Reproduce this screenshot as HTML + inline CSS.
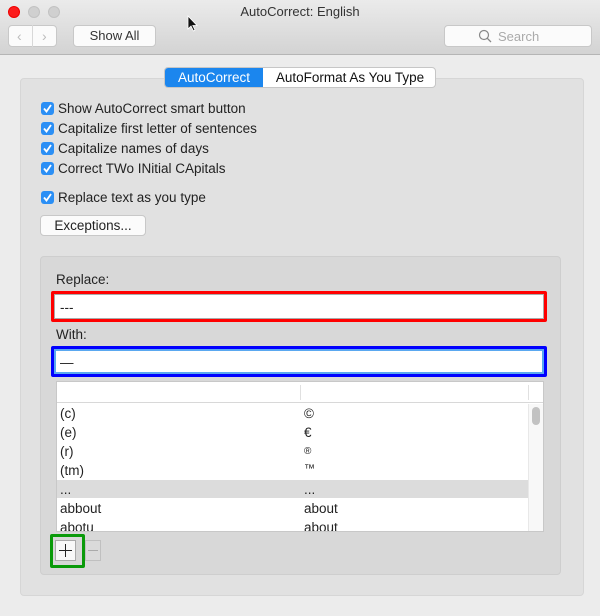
<!DOCTYPE html>
<html><head><meta charset="utf-8"><style>
*{box-sizing:border-box;margin:0;padding:0}
body{width:600px;height:616px;background:#ececec;font-family:"Liberation Sans",sans-serif;font-size:13.5px;color:#222;position:relative;overflow:hidden}
.abs{position:absolute}
.tb{left:0;top:0;width:600px;height:55px;background:linear-gradient(#ebebeb,#d3d3d3);border-bottom:1px solid #b5b5b5}
.light{width:12px;height:12px;border-radius:50%;top:6px;background:#d0d0d0;border:1px solid #c2c2c2}
.btn{background:#fbfbfb;border:1px solid #c8c8c8;border-radius:4px}
.cb{left:41px;width:13px;height:13px;border-radius:3px;background:#2b8ff5}
.cb svg{position:absolute;left:1px;top:1px}
.lbl{left:58px}
.row{left:57px;width:471px;height:19px}
.row span{position:absolute;top:2px}
</style></head><body>
<div class="abs tb"></div>
<div class="abs light" style="left:8px;background:#fc1c1c;border-color:#e00"></div>
<div class="abs light" style="left:28px"></div>
<div class="abs light" style="left:48px"></div>
<div class="abs" style="left:0;width:600px;top:4px;text-align:center;font-size:13px;color:#333">AutoCorrect: English</div>
<div class="abs btn" style="left:8px;top:25px;width:49px;height:22px"></div>
<div class="abs" style="left:32px;top:25px;width:1px;height:22px;background:#d8d8d8"></div>
<div class="abs" style="left:17px;top:28px;color:#bbb;font-size:14px">&#x2039;</div>
<div class="abs" style="left:42px;top:28px;color:#bbb;font-size:14px">&#x203A;</div>
<div class="abs btn" style="left:73px;top:25px;width:83px;height:22px;text-align:center;line-height:20px;color:#333;font-size:13px">Show All</div>
<div class="abs btn" style="left:444px;top:25px;width:148px;height:22px"></div>
<svg class="abs" style="left:478px;top:29px" width="14" height="14"><circle cx="6" cy="6" r="4.5" fill="none" stroke="#888" stroke-width="1.2"/><line x1="9.3" y1="9.3" x2="13" y2="13" stroke="#888" stroke-width="1.3"/></svg>
<div class="abs" style="left:498px;top:29px;color:#aaa;font-size:13px">Search</div>

<div class="abs" style="left:20px;top:78px;width:564px;height:518px;background:#e1e1e1;border:1px solid #d6d6d6;border-radius:4px"></div>
<div class="abs" style="left:164px;top:67px;width:272px;height:21px;background:#fff;border:1px solid #c6c6c6;border-radius:4px;overflow:hidden;font-size:13.5px">
<div class="abs" style="left:0;top:0;width:98px;height:21px;background:#1b86ee;color:#fff;text-align:center;line-height:19px">AutoCorrect</div>
<div class="abs" style="left:98px;top:0;width:174px;text-align:center;line-height:19px;color:#111">AutoFormat As You Type</div></div>

<div class="abs cb" style="top:102px"><svg width="11" height="11"><path d="M2 5.5 L4.5 8.5 L9 2" stroke="#fff" stroke-width="1.8" fill="none"/></svg></div>
<div class="abs lbl" style="top:101px">Show AutoCorrect smart button</div>
<div class="abs cb" style="top:122px"><svg width="11" height="11"><path d="M2 5.5 L4.5 8.5 L9 2" stroke="#fff" stroke-width="1.8" fill="none"/></svg></div>
<div class="abs lbl" style="top:121px">Capitalize first letter of sentences</div>
<div class="abs cb" style="top:142px"><svg width="11" height="11"><path d="M2 5.5 L4.5 8.5 L9 2" stroke="#fff" stroke-width="1.8" fill="none"/></svg></div>
<div class="abs lbl" style="top:141px">Capitalize names of days</div>
<div class="abs cb" style="top:162px"><svg width="11" height="11"><path d="M2 5.5 L4.5 8.5 L9 2" stroke="#fff" stroke-width="1.8" fill="none"/></svg></div>
<div class="abs lbl" style="top:161px">Correct TWo INitial CApitals</div>
<div class="abs cb" style="top:191px"><svg width="11" height="11"><path d="M2 5.5 L4.5 8.5 L9 2" stroke="#fff" stroke-width="1.8" fill="none"/></svg></div>
<div class="abs lbl" style="top:190px">Replace text as you type</div>
<div class="abs btn" style="left:40px;top:215px;width:106px;height:21px;text-align:center;line-height:19px">Exceptions...</div>

<div class="abs" style="left:40px;top:256px;width:521px;height:319px;background:#d8d8d8;border:1px solid #cecece;border-radius:4px"></div>
<div class="abs" style="left:56px;top:272px">Replace:</div>
<div class="abs" style="left:51px;top:291px;width:496px;height:31px;border:3px solid #f00;border-radius:2px;background:#fff"><div style="position:absolute;inset:0;border:1px solid #aaa"></div><div class="abs" style="left:6px;top:6px">---</div></div>
<div class="abs" style="left:56px;top:327px">With:</div>
<div class="abs" style="left:51px;top:346px;width:496px;height:31px;border:3px solid #00f;border-radius:2px;background:#fff"><div style="position:absolute;inset:0;border:2px solid #5aa8f0"></div><div class="abs" style="left:6px;top:6px">—</div></div>

<div class="abs" style="left:56px;top:381px;width:488px;height:151px;background:#fff;border:1px solid #c8c8c8;overflow:hidden">
<div class="abs" style="left:0;top:0;width:488px;height:21px;border-bottom:1px solid #d8d8d8"></div>
<div class="abs" style="left:243px;top:3px;width:1px;height:15px;background:#e0e0e0"></div>
<div class="abs" style="left:471px;top:3px;width:1px;height:15px;background:#e0e0e0"></div>
<div class="abs" style="left:471px;top:22px;width:16px;height:130px;background:#f8f8f8;border-left:1px solid #e8e8e8"></div>
<div class="abs" style="left:475px;top:25px;width:8px;height:18px;border-radius:4px;background:#c2c2c2"></div>
</div>
<div class="abs row" style="top:404px"><span style="left:3px">(c)</span><span style="left:247px">©</span></div>
<div class="abs row" style="top:423px"><span style="left:3px">(e)</span><span style="left:247px">€</span></div>
<div class="abs row" style="top:442px"><span style="left:3px">(r)</span><span style="left:247px;font-size:10px;top:4px">®</span></div>
<div class="abs row" style="top:461px"><span style="left:3px">(tm)</span><span style="left:247px;font-size:11px">™</span></div>
<div class="abs row" style="top:480px;background:#dcdcdc;height:18px"><span style="left:3px">...</span><span style="left:247px">...</span></div>
<div class="abs row" style="top:499px"><span style="left:3px">abbout</span><span style="left:247px">about</span></div>
<div class="abs" style="left:57px;top:518px;width:471px;height:13px;overflow:hidden"><span class="abs" style="left:3px;top:2px">abotu</span><span class="abs" style="left:247px;top:2px">about</span></div>

<div class="abs" style="left:85px;top:540px;width:16px;height:21px;border:1px solid #c0c0c0;background:#dadada"></div>
<div class="abs" style="left:88px;top:550px;width:10px;height:1px;background:#aaa"></div>
<div class="abs" style="left:50px;top:534px;width:35px;height:34px;border:3px solid #0a9a0a;border-radius:2px"></div>
<div class="abs" style="left:55px;top:540px;width:21px;height:21px;border:1px solid #aaa;background:#f8f8f8"></div>
<div class="abs" style="left:65px;top:544px;width:1px;height:13px;background:#222"></div>
<div class="abs" style="left:59px;top:550px;width:13px;height:1px;background:#222"></div>

<svg class="abs" style="left:187px;top:15px" width="12" height="18"><path d="M1 1 L1 14 L4 11 L6.5 16 L8 15 L5.8 10.5 L10 10.5 Z" fill="#111" stroke="#fff" stroke-width="0.8"/></svg>
</body></html>
